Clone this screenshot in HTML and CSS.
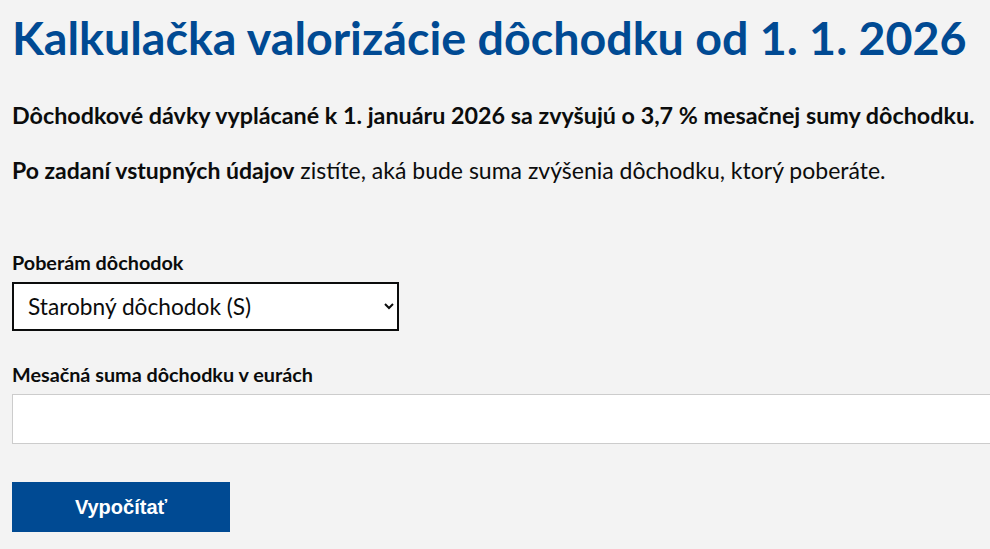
FILE: index.html
```html
<!DOCTYPE html>
<html lang="sk">
<head>
    <meta charset="UTF-8">
    <meta name="viewport" content="width=device-width, initial-scale=1.0">
    <title>Kalkulačka valorizácie dôchodku</title>
    <link rel="stylesheet" href="styles.css">
</head>
<body>

    <div class="calc">
        <h1 class="title">Kalkulačka valorizácie dôchodku od 1. 1. 2026</h1>

        <p class="lead">Dôchodkové dávky vyplácané k 1. januáru 2026 sa zvyšujú o 3,7 % mesačnej sumy dôchodku.</p>

        <p class="intro"><strong>Po zadaní vstupných údajov</strong> zistíte, aká bude suma zvýšenia dôchodku, ktorý poberáte.</p>

        <form class="form" onsubmit="return false;">
            <div class="field">
                <label class="label" for="typ">Poberám dôchodok</label>
                <select id="typ" class="select">
                    <option>Starobný dôchodok (S)</option>
                    <option>Invalidný dôchodok (I)</option>
                    <option>Vdovský dôchodok (V)</option>
                </select>
            </div>

            <div class="field">
                <label class="label" for="suma">Mesačná suma dôchodku v eurách</label>
                <input type="text" id="suma" class="input">
            </div>

            <button type="submit" class="button">Vypočítať</button>
        </form>
    </div>

</body>
</html>
```

FILE: styles.css
```css
* {
    margin: 0;
    padding: 0;
    box-sizing: border-box;
}
body {
    font-family: 'Lato', 'Noto Sans', sans-serif;
    background-color: #f3f3f3;
    color: #0b0c0c;
    padding: 0 12px;
}
.title {
    font-size: 46.6px;
    font-weight: 700;
    color: #004a93;
    line-height: 56px;
    padding-top: 9px;
    white-space: nowrap;
}
.lead {
    font-size: 23.3px;
    font-weight: 700;
    line-height: 28px;
    margin-top: 36px;
    white-space: nowrap;
}
.intro {
    font-size: 23px;
    line-height: 28px;
    margin-top: 27px;
}
.intro strong {
    font-weight: 700;
}
.form {
    margin-top: 66px;
}
.field {
    margin-bottom: 31px;
}
.label {
    display: block;
    font-size: 19.8px;
    font-weight: 700;
    line-height: 24px;
    margin-bottom: 8px;
}
.select {
    width: 387px;
    height: 49px;
    border: 2px solid #0b0c0c;
    background-color: #fff;
    font-family: inherit;
    font-size: 22.7px;
    padding: 0 10px;
    color: #0b0c0c;
    border-radius: 0;
}
.input {
    width: 1000px;
    height: 50px;
    border: 1px solid #cccccc;
    background-color: #fff;
    font-family: inherit;
    font-size: 22px;
    padding: 0 10px;
}
.button {
    display: block;
    width: 218px;
    height: 50px;
    background-color: #004a93;
    color: #fff;
    border: none;
    font-family: 'Liberation Sans', Arial, sans-serif;
    font-size: 20px;
    font-weight: 700;
    margin-top: 38px;
    cursor: pointer;
}
```
